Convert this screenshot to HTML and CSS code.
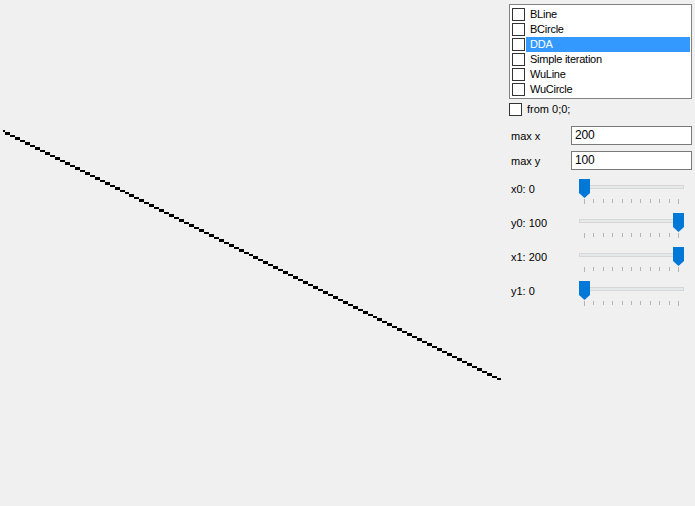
FILE: index.html
```html
<!DOCTYPE html>
<html>
<head>
<meta charset="utf-8">
<link rel="stylesheet" href="styles.css">
</head>
<body>
<div class="app">
  <canvas id="plot" class="plot" width="509" height="506"></canvas>
  <div class="panel">
    <div class="listbox">
      <div class="item"><span class="cb"></span><span class="itext">BLine</span></div>
      <div class="item"><span class="cb"></span><span class="itext">BCircle</span></div>
      <div class="item selected"><span class="cb"></span><span class="itext">DDA</span></div>
      <div class="item"><span class="cb"></span><span class="itext">Simple iteration</span></div>
      <div class="item"><span class="cb"></span><span class="itext">WuLine</span></div>
      <div class="item"><span class="cb"></span><span class="itext">WuCircle</span></div>
    </div>
    <div class="check-row"><span class="cb"></span><span class="ctext">from 0;0;</span></div>
    <div class="field-row"><span class="flabel">max x</span><div class="textbox">200</div></div>
    <div class="field-row second"><span class="flabel">max y</span><div class="textbox">100</div></div>

    <div class="slider-row"><span class="slabel">x0: 0</span>
      <div class="slider"><div class="track"></div>
        <svg class="thumb at-min" width="11" height="19" viewBox="0 0 11 19"><polygon points="0,0 11,0 11,14 5.5,19 0,14" fill="#0078d7"/></svg>
        <div class="ticks"><i class="t"></i><i class="t"></i><i class="t"></i><i class="t"></i><i class="t"></i><i class="t"></i><i class="t"></i><i class="t"></i><i class="t"></i><i class="t"></i><i class="t"></i></div>
      </div>
    </div>
    <div class="slider-row"><span class="slabel">y0: 100</span>
      <div class="slider"><div class="track"></div>
        <svg class="thumb at-max" width="11" height="19" viewBox="0 0 11 19"><polygon points="0,0 11,0 11,14 5.5,19 0,14" fill="#0078d7"/></svg>
        <div class="ticks"><i class="t"></i><i class="t"></i><i class="t"></i><i class="t"></i><i class="t"></i><i class="t"></i><i class="t"></i><i class="t"></i><i class="t"></i><i class="t"></i><i class="t"></i></div>
      </div>
    </div>
    <div class="slider-row"><span class="slabel">x1: 200</span>
      <div class="slider"><div class="track"></div>
        <svg class="thumb at-max" width="11" height="19" viewBox="0 0 11 19"><polygon points="0,0 11,0 11,14 5.5,19 0,14" fill="#0078d7"/></svg>
        <div class="ticks"><i class="t"></i><i class="t"></i><i class="t"></i><i class="t"></i><i class="t"></i><i class="t"></i><i class="t"></i><i class="t"></i><i class="t"></i><i class="t"></i><i class="t"></i></div>
      </div>
    </div>
    <div class="slider-row"><span class="slabel">y1: 0</span>
      <div class="slider"><div class="track"></div>
        <svg class="thumb at-min" width="11" height="19" viewBox="0 0 11 19"><polygon points="0,0 11,0 11,14 5.5,19 0,14" fill="#0078d7"/></svg>
        <div class="ticks"><i class="t"></i><i class="t"></i><i class="t"></i><i class="t"></i><i class="t"></i><i class="t"></i><i class="t"></i><i class="t"></i><i class="t"></i><i class="t"></i><i class="t"></i></div>
      </div>
    </div>
  </div>
</div>
<script src="app.js"></script>
</body>
</html>
```

FILE: styles.css
```css
html, body {
  margin: 0;
  padding: 0;
  background: #f0f0f0;
  font-family: "Liberation Sans", Arial, sans-serif;
  font-size: 11px;
  color: #000;
}
.app {
  display: flex;
  width: 695px;
  height: 506px;
  overflow: hidden;
}
.plot {
  display: block;
  width: 509px;
  height: 506px;
  flex: none;
}
.panel {
  width: 183px;
  flex: none;
  display: flex;
  flex-direction: column;
  padding-top: 4px;
}
.listbox {
  box-sizing: border-box;
  height: 95px;
  background: #fff;
  border: 1px solid #828282;
  padding: 2px 1px 0 2px;
  margin-bottom: 4px;
}
.item {
  height: 15px;
  display: flex;
  align-items: center;
}
.cb {
  box-sizing: border-box;
  width: 13px;
  height: 13px;
  border: 1px solid #333;
  background: #fff;
  flex: none;
}
.itext {
  flex: 1;
  height: 15px;
  line-height: 15px;
  margin-left: 1px;
  padding-left: 4px;
  letter-spacing: -0.25px;
  white-space: nowrap;
}
.item.selected .itext {
  background: #3399ff;
  color: #fff;
}
.check-row {
  display: flex;
  align-items: center;
  height: 13px;
  margin-bottom: 10px;
}
.ctext {
  margin-left: 5px;
  line-height: 13px;
}
.field-row {
  display: flex;
  align-items: center;
  height: 19px;
}
.field-row.second {
  margin-top: 6px;
  margin-bottom: 9px;
}
.flabel {
  width: 60px;
  padding-left: 2px;
}
.textbox {
  box-sizing: border-box;
  width: 121px;
  height: 19px;
  border: 1px solid #7a7a7a;
  background: #fff;
  padding-left: 3px;
  font-size: 12px;
  line-height: 17px;
  letter-spacing: -0.2px;
}
.slider-row {
  display: flex;
  height: 34px;
}
.slabel {
  width: 68px;
  padding-left: 2px;
  padding-top: 4px;
  line-height: 13px;
  flex: none;
}
.slider {
  position: relative;
  width: 105px;
  height: 26px;
}
.track {
  box-sizing: border-box;
  margin-top: 6px;
  height: 4px;
  background: #e7eaea;
  border: 1px solid #d6d6d6;
}
.thumb {
  position: absolute;
  top: 0;
  display: block;
}
.thumb.at-min { left: 0; }
.thumb.at-max { right: 0; }
.ticks {
  display: flex;
  justify-content: space-between;
  margin: 10px 5px 0 5px;
  height: 4px;
}
.t {
  display: block;
  width: 1px;
  height: 4px;
  background: #b4b4b4;
}
.t:first-child, .t:last-child {
  height: 5px;
}
```

FILE: app.js
```js
(function () {
  var c = document.getElementById('plot');
  var ctx = c.getContext('2d');
  ctx.fillStyle = '#000';
  var s = 2.48, ox = 3, oy = 130;
  for (var x = 0; x <= 200; x++) {
    var y = Math.round(x / 2);
    var px = Math.round(ox + x * s), py = Math.round(oy + y * s);
    var w = Math.round(ox + (x + 1) * s) - px;
    var h = Math.round(oy + (y + 1) * s) - py;
    ctx.fillRect(px, py, w, h);
  }
})();
```
